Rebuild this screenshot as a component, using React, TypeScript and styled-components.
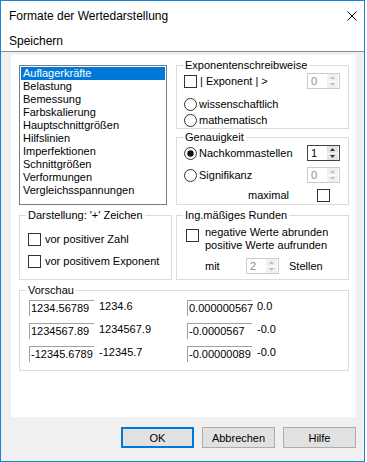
import React from 'react'
import styled, { createGlobalStyle } from 'styled-components'

const GlobalStyle = createGlobalStyle`
  html, body {
    margin: 0;
    padding: 0;
    background: #ffffff;
  }
  body {
    font-family: 'Liberation Sans', Arial, sans-serif;
    font-size: 11px;
    color: #000000;
  }
`

const listItems = [
  'Auflagerkräfte',
  'Belastung',
  'Bemessung',
  'Farbskalierung',
  'Hauptschnittgrößen',
  'Hilfslinien',
  'Imperfektionen',
  'Schnittgrößen',
  'Verformungen',
  'Vergleichsspannungen',
]

const preview = [
  ['1234.56789', '1234.6', '0.000000567', '0.0'],
  ['1234567.89', '1234567.9', '-0.0000567', '-0.0'],
  ['-12345.6789', '-12345.7', '-0.00000089', '-0.0'],
]

const Spin: React.FC<{ value: string; disabled?: boolean }> = ({ value, disabled }) => (
  <SpinBox $disabled={disabled}>
    <SpinValue $disabled={disabled}>{value}</SpinValue>
    <SpinArrows>
      <SpinArrow $disabled={disabled}>
        <svg width="5" height="3" viewBox="0 0 5 3">
          <path d="M2.5 0 L5 3 L0 3 Z" />
        </svg>
      </SpinArrow>
      <SpinArrow $disabled={disabled}>
        <svg width="5" height="3" viewBox="0 0 5 3">
          <path d="M0 0 L5 0 L2.5 3 Z" />
        </svg>
      </SpinArrow>
    </SpinArrows>
  </SpinBox>
)

const Radio: React.FC<{ checked?: boolean }> = ({ checked }) => (
  <RadioIcon width="13" height="13" viewBox="0 0 13 13">
    <circle cx="6.5" cy="6.5" r="6" fill="#fff" stroke="#333" strokeWidth="1" />
    {checked && <circle cx="6.5" cy="6.5" r="3.2" fill="#111" />}
  </RadioIcon>
)

const App: React.FC = () => {
  return (
    <>
      <GlobalStyle />
      <Window>
        <TitleBar>
          <Title>Formate der Wertedarstellung</Title>
          <CloseIcon width="10" height="10" viewBox="0 0 10 10">
            <path d="M0.5 0.5 L9.5 9.5 M9.5 0.5 L0.5 9.5" stroke="#000" strokeWidth="1" />
          </CloseIcon>
        </TitleBar>
        <MenuBar>
          <MenuItem>Speichern</MenuItem>
        </MenuBar>
        <Body>
          <Panel>
            <TopGrid>
              <ListBox>
                {listItems.map((item, i) => (
                  <ListItem key={item} $selected={i === 0}>
                    {item}
                  </ListItem>
                ))}
              </ListBox>
              <RightColumn>
                <Group $height={70}>
                  <Legend>Exponentenschreibweise</Legend>
                  <GroupBody $top={1} $left={7} $right={8}>
                    <Row $gap={3} $mb={7}>
                      <CheckBox />
                      <span>| Exponent | &gt;</span>
                      <Push />
                      <Spin value="0" disabled />
                    </Row>
                    <Row $gap={2}>
                      <Radio />
                      <span>wissenschaftlich</span>
                    </Row>
                    <Row $gap={2}>
                      <Radio />
                      <span>mathematisch</span>
                    </Row>
                  </GroupBody>
                </Group>
                <Group $height={74}>
                  <Legend>Genauigkeit</Legend>
                  <GroupBody $top={1} $left={7} $right={8}>
                    <Row $gap={2} $mb={6}>
                      <Radio checked />
                      <span>Nachkommastellen</span>
                      <Push />
                      <Spin value="1" />
                    </Row>
                    <Row $gap={2} $mb={4}>
                      <Radio />
                      <span>Signifikanz</span>
                      <Push />
                      <Spin value="0" disabled />
                    </Row>
                    <Row $gap={28}>
                      <MaximalLabel>maximal</MaximalLabel>
                      <CheckBox />
                    </Row>
                  </GroupBody>
                </Group>
              </RightColumn>
              <Group $height={71}>
                <Legend>Darstellung: '+' Zeichen</Legend>
                <GroupBody $top={9} $left={8} $right={8}>
                  <Row $gap={4} $mb={6}>
                    <CheckBox />
                    <span>vor positiver Zahl</span>
                  </Row>
                  <Row $gap={4}>
                    <CheckBox />
                    <span>vor positivem Exponent</span>
                  </Row>
                </GroupBody>
              </Group>
              <Group $height={71}>
                <Legend>Ing.mäßiges Runden</Legend>
                <GroupBody $top={4} $left={9} $right={8}>
                  <RoundingRow>
                    <CheckBox />
                    <Lines>
                      <span>negative Werte abrunden</span>
                      <span>positive Werte aufrunden</span>
                    </Lines>
                  </RoundingRow>
                  <DigitsRow>
                    <MitLabel>mit</MitLabel>
                    <Spin value="2" disabled />
                    <span>Stellen</span>
                  </DigitsRow>
                </GroupBody>
              </Group>
            </TopGrid>
            <Group $height={87} $mt={4}>
              <Legend>Vorschau</Legend>
              <PreviewGrid>
                {preview.map((row) => (
                  <React.Fragment key={row[0]}>
                    <PreviewField>{row[0]}</PreviewField>
                    <PreviewResult>{row[1]}</PreviewResult>
                    <PreviewField>{row[2]}</PreviewField>
                    <PreviewResult>{row[3]}</PreviewResult>
                  </React.Fragment>
                ))}
              </PreviewGrid>
            </Group>
          </Panel>
          <ButtonRow>
            <Button $default>OK</Button>
            <Button>Abbrechen</Button>
            <Button>Hilfe</Button>
          </ButtonRow>
        </Body>
      </Window>
    </>
  )
}

const Window = styled.div`
  width: 365px;
  height: 462px;
  box-sizing: border-box;
  border: 1px solid #1883d7;
  display: flex;
  flex-direction: column;
  background: #ffffff;
`

const TitleBar = styled.div`
  height: 30px;
  flex-shrink: 0;
  display: flex;
  align-items: center;
  justify-content: space-between;
  padding-left: 8px;
  padding-right: 7px;
  font-size: 12px;
`

const Title = styled.span`
  color: #000000;
`

const CloseIcon = styled.svg`
  display: block;
`

const MenuBar = styled.div`
  height: 20px;
  flex-shrink: 0;
  display: flex;
  align-items: center;
  padding-left: 8px;
  border-bottom: 1px solid #8a8a8a;
  font-size: 12px;
`

const MenuItem = styled.span`
  color: #000000;
`

const Body = styled.div`
  flex: 1;
  display: flex;
  flex-direction: column;
  background: #f0f0f0;
  padding: 3px 8px 13px 10px;
  min-height: 0;
`

const Panel = styled.div`
  flex: 1;
  background: #ffffff;
  padding: 4px 7px 0 8px;
`

const TopGrid = styled.div`
  display: grid;
  grid-template-columns: 153px 1fr;
  gap: 4px 4px;
`

const ListBox = styled.div`
  margin-top: 6px;
  width: 148px;
  height: 140px;
  box-sizing: border-box;
  border: 1px solid #7a7a7a;
  padding: 1px;
`

const ListItem = styled.div<{ $selected?: boolean }>`
  height: 13px;
  line-height: 13px;
  padding-left: 2px;
  white-space: nowrap;
  background: ${(p) => (p.$selected ? '#0078d7' : 'transparent')};
  color: ${(p) => (p.$selected ? '#ffffff' : '#000000')};
`

const RightColumn = styled.div`
  display: flex;
  flex-direction: column;
  gap: 2px;
`

const Group = styled.fieldset<{ $height: number; $mt?: number }>`
  margin: ${(p) => p.$mt ?? 0}px 0 0 0;
  padding: 0;
  min-width: 0;
  box-sizing: border-box;
  height: ${(p) => p.$height}px;
  border: 1px solid #dcdcdc;
`

const Legend = styled.legend`
  margin-left: 6px;
  padding: 0 2px;
  line-height: 13px;
  font-size: 11px;
`

const GroupBody = styled.div<{ $top: number; $left: number; $right: number }>`
  padding: ${(p) => p.$top}px ${(p) => p.$right}px 0 ${(p) => p.$left}px;
`

const Row = styled.div<{ $gap: number; $mb?: number }>`
  display: flex;
  align-items: center;
  height: 16px;
  gap: ${(p) => p.$gap}px;
  margin-bottom: ${(p) => p.$mb ?? 0}px;
  white-space: nowrap;
`

const Push = styled.div`
  flex: 1;
`

const CheckBox = styled.div`
  width: 13px;
  height: 13px;
  box-sizing: border-box;
  border: 1px solid #333333;
  background: #ffffff;
  flex-shrink: 0;
`

const RadioIcon = styled.svg`
  display: block;
  flex-shrink: 0;
`

const MaximalLabel = styled.span`
  margin-left: 64px;
`

const RoundingRow = styled.div`
  display: flex;
  align-items: flex-start;
  gap: 6px;
  & > ${CheckBox} {
    margin-top: 3px;
  }
`

const Lines = styled.div`
  display: flex;
  flex-direction: column;
  line-height: 13px;
  white-space: nowrap;
`

const DigitsRow = styled.div`
  display: flex;
  align-items: center;
  height: 16px;
  margin-top: 6px;
  padding-left: 19px;
  gap: 10px;
`

const MitLabel = styled.span`
  width: 31px;
`

const SpinBox = styled.div<{ $disabled?: boolean }>`
  display: flex;
  width: 33px;
  height: 16px;
  box-sizing: border-box;
  border: 1px solid ${(p) => (p.$disabled ? '#cccccc' : '#444444')};
  background: #ffffff;
  flex-shrink: 0;
`

const SpinValue = styled.div<{ $disabled?: boolean }>`
  flex: 1;
  padding-left: 3px;
  line-height: 14px;
  color: ${(p) => (p.$disabled ? '#8c8c8c' : '#000000')};
`

const SpinArrows = styled.div`
  width: 11px;
  display: flex;
  flex-direction: column;
  gap: 1px;
  padding: 0 1px 0 0;
`

const SpinArrow = styled.div<{ $disabled?: boolean }>`
  flex: 1;
  display: flex;
  align-items: center;
  justify-content: center;
  background: ${(p) => (p.$disabled ? '#f0f0f0' : '#e1e1e1')};
  svg {
    display: block;
    fill: ${(p) => (p.$disabled ? '#bfbfbf' : '#333333')};
  }
`

const PreviewGrid = styled.div`
  display: grid;
  grid-template-columns: 65px 83px 65px 1fr;
  column-gap: 5px;
  row-gap: 7px;
  padding: 3px 8px 0 9px;
`

const PreviewField = styled.div`
  height: 16px;
  box-sizing: border-box;
  border-top: 1px solid #a0a0a0;
  border-left: 1px solid #a0a0a0;
  padding-left: 1px;
  line-height: 15px;
  white-space: nowrap;
`

const PreviewResult = styled.div`
  height: 16px;
  line-height: 13px;
  white-space: nowrap;
`

const ButtonRow = styled.div`
  display: flex;
  justify-content: flex-end;
  gap: 8px;
  margin-top: 10px;
  flex-shrink: 0;
`

const Button = styled.button<{ $default?: boolean }>`
  width: 73px;
  height: 21px;
  box-sizing: border-box;
  margin: 0;
  padding: 0;
  font-family: 'Liberation Sans', Arial, sans-serif;
  font-size: 11px;
  color: #000000;
  background: #e1e1e1;
  border: ${(p) => (p.$default ? '2px solid #0078d7' : '1px solid #adadad')};
`

export default App
